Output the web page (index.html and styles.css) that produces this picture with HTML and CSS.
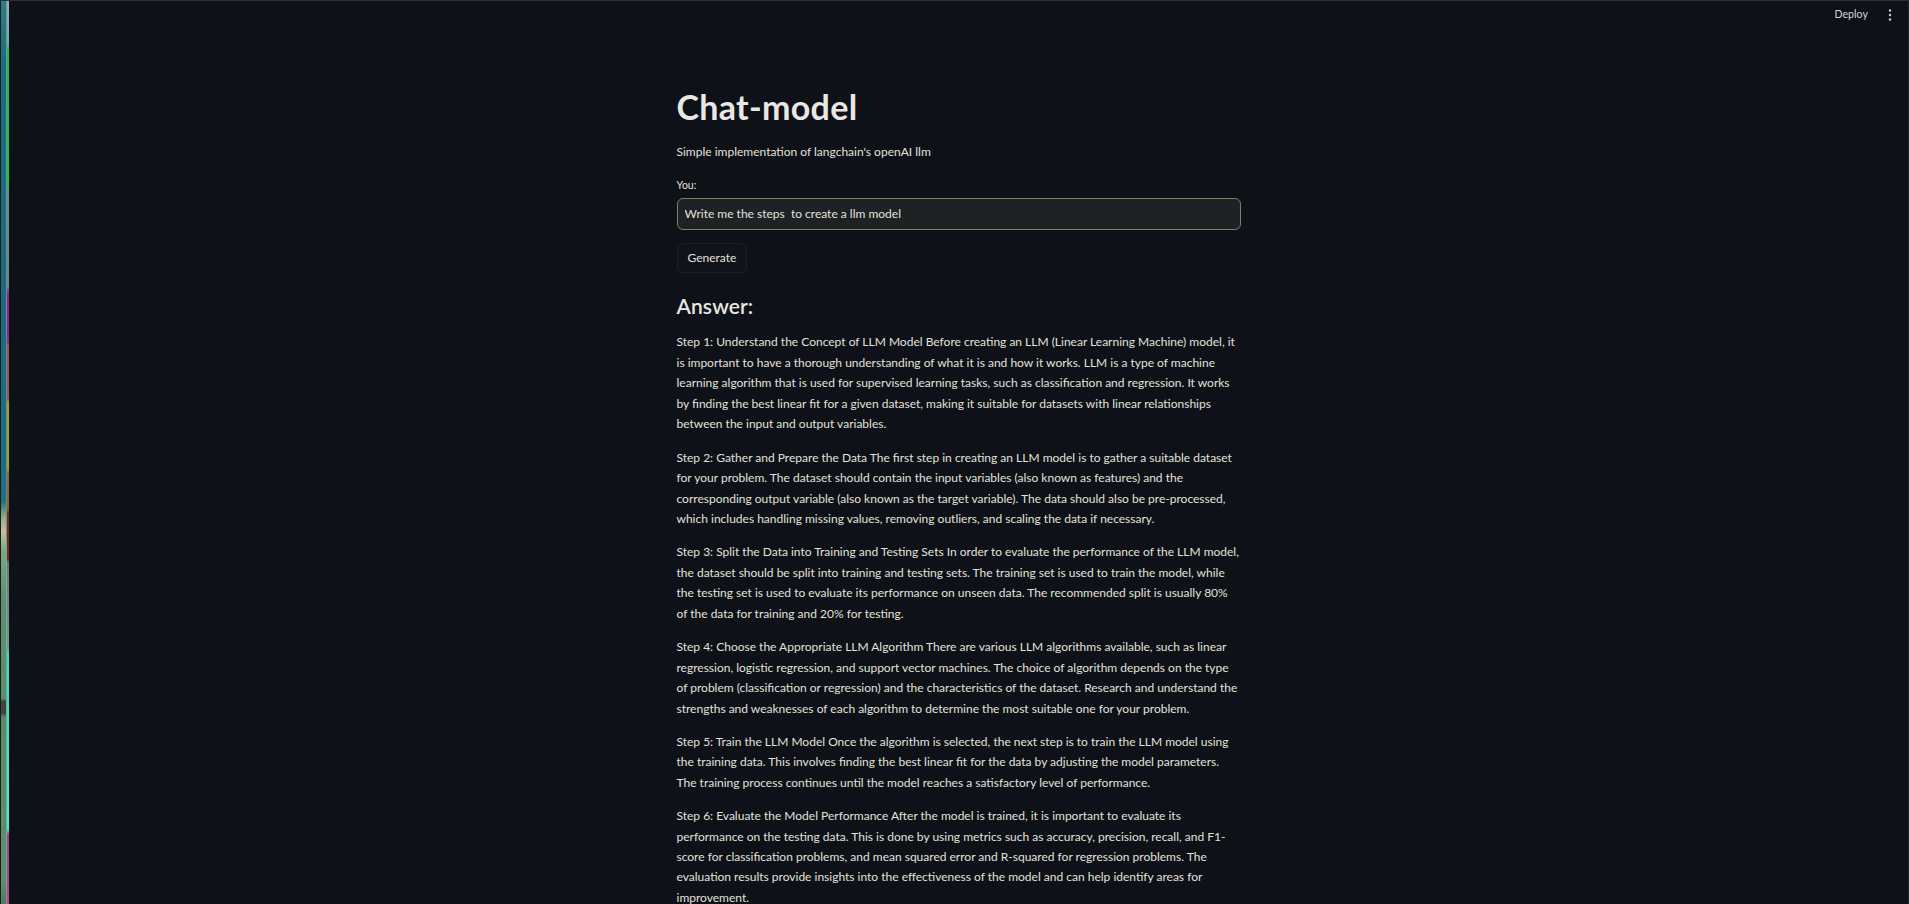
FILE: index.html
```html
<!DOCTYPE html>
<html lang="en">
<head>
<meta charset="utf-8">
<title>Chat-model</title>
<link rel="stylesheet" href="styles.css">
</head>
<body>
<div class="frame">
  <div class="strip">
    <div class="strip-a"></div>
    <div class="strip-b"></div>
    <div class="strip-c"></div>
  </div>
  <div class="app">
    <header class="topbar">
      <span class="deploy">Deploy</span>
      <span class="kebab" aria-label="Main menu">
        <svg width="4" height="12" viewBox="0 0 4 12"><circle cx="2" cy="1.5" r="1.2" fill="#d0d0d0"/><circle cx="2" cy="6" r="1.2" fill="#d0d0d0"/><circle cx="2" cy="10.5" r="1.2" fill="#d0d0d0"/></svg>
      </span>
    </header>
    <main class="main">
      <div class="block">
        <h1 class="title">Chat-model</h1>
        <p class="subtitle">Simple implementation of langchain's openAI llm</p>
        <label class="field-label" for="prompt">You:</label>
        <input class="field" id="prompt" type="text" value="Write me the steps  to create a llm model">
        <button class="btn" type="button">Generate</button>
        <h3 class="answer-title">Answer:</h3>
        <div class="answer">
          <p>Step 1: Understand the Concept of LLM Model Before creating an LLM (Linear Learning Machine) model, it is important to have a thorough understanding of what it is and how it works. LLM is a type of machine learning algorithm that is used for supervised learning tasks, such as classification and regression. It works by finding the best linear fit for a given dataset, making it suitable for datasets with linear relationships between the input and output variables.</p>
          <p>Step 2: Gather and Prepare the Data The first step in creating an LLM model is to gather a suitable dataset for your problem. The dataset should contain the input variables (also known as features) and the corresponding output variable (also known as the target variable). The data should also be pre-processed, which includes handling missing values, removing outliers, and scaling the data if necessary.</p>
          <p>Step 3: Split the Data into Training and Testing Sets In order to evaluate the performance of the LLM model, the dataset should be split into training and testing sets. The training set is used to train the model, while the testing set is used to evaluate its performance on unseen data. The recommended split is usually 80% of the data for training and 20% for testing.</p>
          <p>Step 4: Choose the Appropriate LLM Algorithm There are various LLM algorithms available, such as linear regression, logistic regression, and support vector machines. The choice of algorithm depends on the type of problem (classification or regression) and the characteristics of the dataset. Research and understand the strengths and weaknesses of each algorithm to determine the most suitable one for your problem.</p>
          <p>Step 5: Train the LLM Model Once the algorithm is selected, the next step is to train the LLM model using the training data. This involves finding the best linear fit for the data by adjusting the model parameters. The training process continues until the model reaches a satisfactory level of performance.</p>
          <p>Step 6: Evaluate the Model Performance After the model is trained, it is important to evaluate its performance on the testing data. This is done by using metrics such as accuracy, precision, recall, and F1-score for classification problems, and mean squared error and R-squared for regression problems. The evaluation results provide insights into the effectiveness of the model and can help identify areas for improvement.</p>
        </div>
      </div>
    </main>
  </div>
</div>
</body>
</html>
```
FILE: styles.css
```css
html, body {
  margin: 0;
  padding: 0;
  height: 100%;
  overflow: hidden;
  background: #0e1117;
}

body {
  font-family: "Lato", "Liberation Sans", sans-serif;
  color: #e3e1dc;
  font-size: 12px;
  letter-spacing: 0;
}

.frame {
  display: flex;
  height: 100%;
  border-top: 1px solid #2c2e33;
  box-sizing: border-box;
}

/* coloured edge on the left */
.strip {
  display: flex;
  width: 9px;
  flex: 0 0 9px;
  border-left: 1px solid #1b1d20;
  box-sizing: border-box;
}
.strip-a {
  width: 5px;
  background: linear-gradient(to bottom,
    #2a7e88 0, #1d6b7b 60px, #1c6a7c 300px, #1e6f80 500px,
    #8aa888 515px, #c8c0a0 530px, #7aa880 550px,
    #5d9072 600px, #5b8c6c 698px, #3a4440 700px, #3a4440 712px,
    #5a8a6a 716px, #5f8e70 880px, #4e7862 904px);
}
.strip-b {
  width: 1px;
  background: linear-gradient(to bottom,
    #6a9898 0, #5b8b8a 500px, #7aa890 560px, #78a48c 880px, #b070a0 904px);
}
.strip-c {
  width: 2px;
  background: linear-gradient(to bottom,
    #9ab0ae 0, #78a8a8 40px,
    #22b84c 50px, #1ec445 185px,
    #6a8c90 190px, #6a8890 285px,
    #a01e96 292px, #96209a 340px,
    #a05454 345px, #9a5850 398px,
    #aaa020 402px, #a8a024 468px,
    #8a6a30 472px, #8a6430 508px,
    #7c2a22 512px, #7a2a22 558px,
    #6c7c74 562px, #7a9a88 648px,
    #40d8bc 652px, #48eccc 828px,
    #9c4a82 834px, #b04a88 904px);
}

.app {
  flex: 1;
  display: flex;
  flex-direction: column;
  min-width: 0;
  border-right: 1px solid #222429;
}

.topbar {
  height: 25px;
  display: flex;
  align-items: center;
  justify-content: flex-end;
  gap: 20px;
  padding-right: 16px;
  flex: 0 0 auto;
}
.deploy {
  font-size: 10.5px;
  color: #d5d6d8;
  letter-spacing: 0.1px;
}
.kebab {
  display: flex;
  padding-top: 3px;
}

.main {
  flex: 1;
  padding-top: 61px;
}
.block {
  width: 564px;
  margin: 0 auto;
  display: flex;
  flex-direction: column;
  align-items: flex-start;
}

.title {
  margin: 0;
  font-size: 34px;
  line-height: 40.8px;
  font-weight: 700;
  color: #e9e7e3;
  letter-spacing: 0.3px;
}

.subtitle {
  margin: 14.3px 0 0;
  line-height: 20.48px;
}

.field-label {
  margin-top: 14.3px;
  font-size: 10.5px;
  line-height: 16px;
}

.field {
  margin: 5.1px 0 0;
  width: 100%;
  height: 32px;
  box-sizing: border-box;
  padding: 0 7px;
  background: #1f2225;
  border: 1px solid #857b66;
  border-radius: 6px;
  color: #e3e1dc;
  font: inherit;
  outline: none;
}

.btn {
  margin-top: 13px;
  height: 30px;
  padding: 0 10px;
  background: #10131a;
  border: 1px solid #1c1f26;
  border-radius: 6px;
  color: #e3e1dc;
  font: inherit;
}

.answer-title {
  margin: 21.4px 0 0;
  font-size: 21px;
  line-height: 24px;
  font-weight: 600;
  color: #e9e7e3;
  letter-spacing: 0.1px;
}

.answer {
  margin-top: 14px;
  width: 100%;
}
.answer p {
  margin: 0 0 12.8px;
  line-height: 20.48px;
}
```
